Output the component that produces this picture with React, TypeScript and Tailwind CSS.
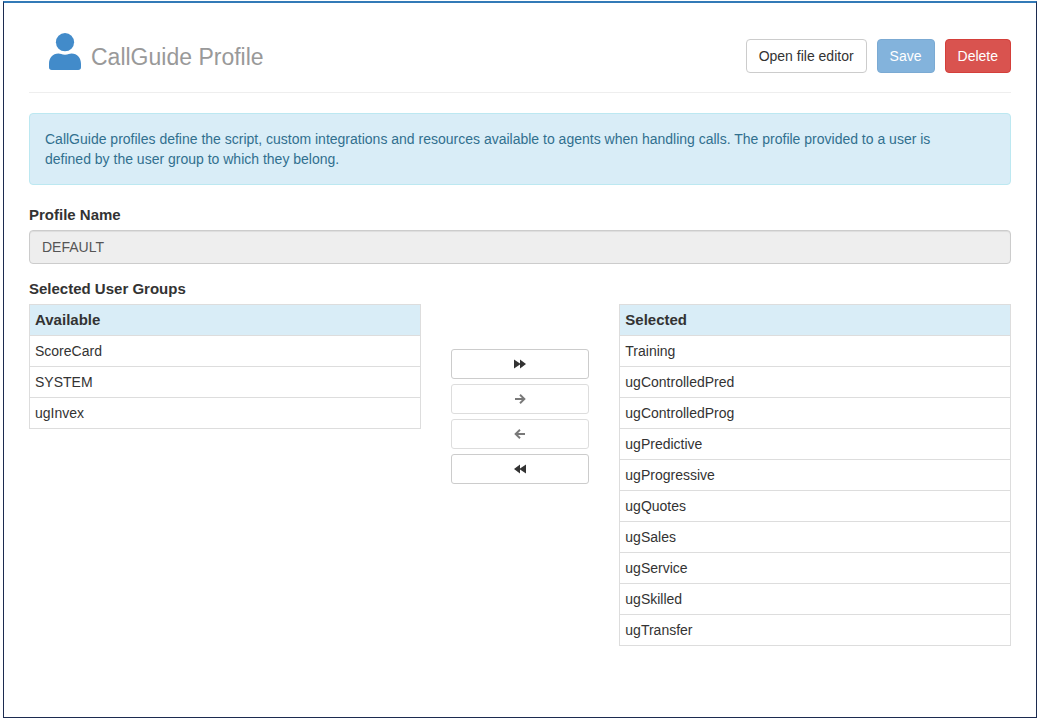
import React, { useState } from 'react';

const initialAvailable = ['ScoreCard', 'SYSTEM', 'ugInvex'];

const initialSelected = [
  'Training',
  'ugControlledPred',
  'ugControlledProg',
  'ugPredictive',
  'ugProgressive',
  'ugQuotes',
  'ugSales',
  'ugService',
  'ugSkilled',
  'ugTransfer',
];

const UserIcon = () => (
  <svg viewBox="0 0 32 37" className="w-8 h-[37px] shrink-0" fill="#428bca" aria-hidden="true">
    <circle cx="16" cy="9.2" r="9.1" />
    <path d="M9.5 20.6C11.6 20.6 12.6 21.8 16 21.8C19.4 21.8 20.4 20.6 22.5 20.6C28.4 20.6 32 25.2 32 31V34.2C32 36 31 37 29.2 37H2.8C1 37 0 36 0 34.2V31C0 25.2 3.6 20.6 9.5 20.6Z" />
  </svg>
);

const FastIcon = ({ flip = false }: { flip?: boolean }) => (
  <svg viewBox="0 0 12 10" className={flip ? 'w-3 h-[10px] rotate-180' : 'w-3 h-[10px]'} fill="currentColor" aria-hidden="true">
    <path d="M0 0.5L6 4.4V0.5L12 5L6 9.5V5.6L0 9.5Z" />
  </svg>
);

const ArrowIcon = ({ flip = false }: { flip?: boolean }) => (
  <svg
    viewBox="0 0 12 10"
    className={flip ? 'w-3 h-[10px] rotate-180' : 'w-3 h-[10px]'}
    fill="none"
    stroke="currentColor"
    strokeWidth="1.9"
    aria-hidden="true"
  >
    <path d="M1 5H10.5M6 0.7L10.4 5L6 9.3" />
  </svg>
);

interface GroupTableProps {
  title: string;
  groups: string[];
  active: string | null;
  onPick: (group: string) => void;
}

const GroupTable = ({ title, groups, active, onPick }: GroupTableProps) => (
  <table className="w-full border-collapse border border-[#ddd]">
    <thead>
      <tr>
        <th scope="col" className="border border-[#ddd] bg-[#d9edf7] p-[5px] text-left text-[15px] leading-5 font-bold">{title}</th>
      </tr>
    </thead>
    <tbody>
      {groups.map((group) => (
        <tr key={group} onClick={() => onPick(group)} className={active === group ? 'bg-gray-100' : ''}>
          <td className="border border-[#ddd] p-[5px] cursor-pointer">{group}</td>
        </tr>
      ))}
    </tbody>
  </table>
);

const moveClass =
  'flex h-[30px] w-full items-center justify-center rounded-[3px] border border-[#ccc] bg-white text-[#333] disabled:opacity-65';

export default function App() {
  const [available, setAvailable] = useState(initialAvailable);
  const [selected, setSelected] = useState(initialSelected);
  const [left, setLeft] = useState<string | null>(null);
  const [right, setRight] = useState<string | null>(null);

  const addAll = () => {
    setSelected([...selected, ...available]);
    setAvailable([]);
    setLeft(null);
  };

  const removeAll = () => {
    setAvailable([...available, ...selected]);
    setSelected([]);
    setRight(null);
  };

  const addOne = () => {
    if (!left) return;
    setSelected([...selected, left]);
    setAvailable(available.filter((g) => g !== left));
    setLeft(null);
  };

  const removeOne = () => {
    if (!right) return;
    setAvailable([...available, right]);
    setSelected(selected.filter((g) => g !== right));
    setRight(null);
  };

  return (
    <div className="flex min-h-screen flex-col bg-white pt-px pr-[2px] pb-[2px] pl-[3px] font-['Liberation_Sans',Arial,sans-serif] text-sm leading-5 text-[#333]">
      <main className="grow border border-t-2 border-[#1c2b50] border-t-[#337ab7] px-[25px] pt-[30px] pb-5">
        <header className="mb-5 flex items-end justify-between border-b border-[#eee] pb-[19px]">
          <h1 className="ml-5 flex items-end gap-[10px] pb-[3px] text-[23px] leading-[26px] text-[#999]">
            <UserIcon />
            CallGuide Profile
          </h1>
          <div className="flex gap-[10px]">
            <button type="button" className="h-[34px] rounded-sm border border-[#ccc] bg-white px-3">
              Open file editor
            </button>
            <button type="button" disabled className="h-[34px] rounded-sm border border-[#357ebd] bg-[#428bca] px-3 text-white disabled:opacity-65">
              Save
            </button>
            <button type="button" className="h-[34px] rounded-sm border border-[#d43f3a] bg-[#d9534f] px-3 text-white">
              Delete
            </button>
          </div>
        </header>

        <p className="mb-5 rounded-sm border border-[#bce8f1] bg-[#d9edf7] py-[15px] pr-[35px] pl-[15px] text-[#31708f]">
          CallGuide profiles define the script, custom integrations and resources available to agents when handling calls. The
          profile provided to a user is defined by the user group to which they belong.
        </p>

        <label htmlFor="profile-name" className="mb-[5px] block text-[15px] leading-5 font-bold">Profile Name</label>
        <input
          id="profile-name"
          type="text"
          readOnly
          value="DEFAULT"
          className="mb-[15px] block h-[34px] w-full rounded-sm border border-[#ccc] bg-[#eee] px-3 text-[#555] shadow-[inset_0_1px_1px_rgba(0,0,0,0.075)]"
        />

        <h2 className="mb-[5px] text-[15px] leading-5 font-bold">Selected User Groups</h2>
        <div className="grid grid-cols-12 items-start gap-x-[30px]">
          <div className="col-span-5">
            <GroupTable title="Available" groups={available} active={left} onPick={setLeft} />
          </div>
          <div className="col-span-2 mt-[45px] flex flex-col gap-[5px]">
            <button type="button" aria-label="Add all" className={moveClass} onClick={addAll}>
              <FastIcon />
            </button>
            <button type="button" aria-label="Add" className={moveClass} disabled={!left} onClick={addOne}>
              <ArrowIcon />
            </button>
            <button type="button" aria-label="Remove" className={moveClass} disabled={!right} onClick={removeOne}>
              <ArrowIcon flip />
            </button>
            <button type="button" aria-label="Remove all" className={moveClass} onClick={removeAll}>
              <FastIcon flip />
            </button>
          </div>
          <div className="col-span-5">
            <GroupTable title="Selected" groups={selected} active={right} onPick={setRight} />
          </div>
        </div>
      </main>
    </div>
  );
}
